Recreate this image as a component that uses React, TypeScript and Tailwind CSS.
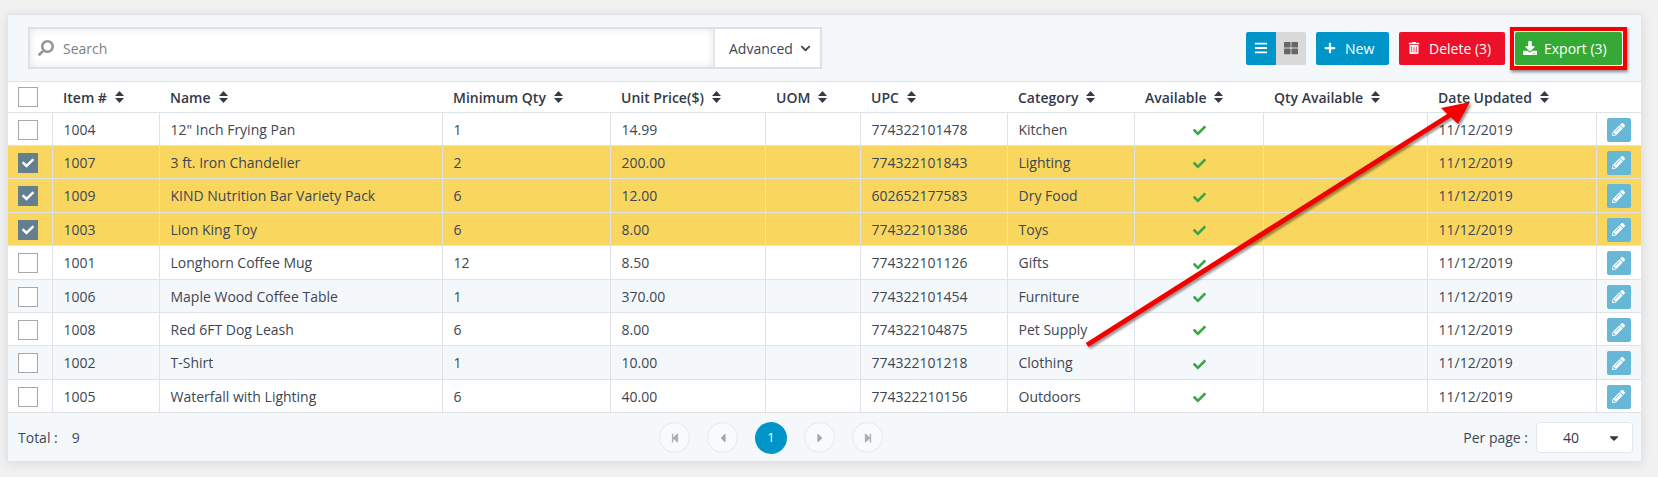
import { FaBars, FaCaretDown, FaCaretLeft, FaCaretRight, FaCheck, FaChevronDown, FaDownload, FaPencilAlt, FaPlus, FaSearch, FaStepBackward, FaStepForward, FaThLarge, FaTrashAlt } from 'react-icons/fa';
import type { ReactNode } from 'react';

interface Item {
  id: string;
  name: string;
  qty: string;
  price: string;
  upc: string;
  category: string;
  tall?: boolean;
  selected?: boolean;
}

const items: Item[] = [
  { id: '1004', name: '12" Inch Frying Pan', qty: '1', price: '14.99', upc: '774322101478', category: 'Kitchen' },
  { id: '1007', name: '3 ft. Iron Chandelier', qty: '2', price: '200.00', upc: '774322101843', category: 'Lighting', selected: true },
  { id: '1009', name: 'KIND Nutrition Bar Variety Pack', qty: '6', price: '12.00', upc: '602652177583', category: 'Dry Food', selected: true, tall: true },
  { id: '1003', name: 'Lion King Toy', qty: '6', price: '8.00', upc: '774322101386', category: 'Toys', selected: true },
  { id: '1001', name: 'Longhorn Coffee Mug', qty: '12', price: '8.50', upc: '774322101126', category: 'Gifts', tall: true },
  { id: '1006', name: 'Maple Wood Coffee Table', qty: '1', price: '370.00', upc: '774322101454', category: 'Furniture' },
  { id: '1008', name: 'Red 6FT Dog Leash', qty: '6', price: '8.00', upc: '774322104875', category: 'Pet Supply' },
  { id: '1002', name: 'T-Shirt', qty: '1', price: '10.00', upc: '774322101218', category: 'Clothing', tall: true },
  { id: '1005', name: 'Waterfall with Lighting', qty: '6', price: '40.00', upc: '774322210156', category: 'Outdoors' },
];

const headers = ['Item #', 'Name', 'Minimum Qty', 'Unit Price($)', 'UOM', 'UPC', 'Category', 'Available', 'Qty Available', 'Date Updated'];
const widths = [45, 107, 283, 168, 155, 95, 147, 127, 129, 164, 169, 46];

function SortIcon() {
  return (
    <svg width="9" height="12" viewBox="0 0 9 12" className="ml-2 shrink-0 text-[#333a47]" fill="currentColor">
      <path d="M4.5 0 9 5H0z" />
      <path d="M0 7h9l-4.5 5z" />
    </svg>
  );
}

function Checkbox({ checked }: { checked?: boolean }) {
  if (checked) {
    return (
      <span className="flex h-5 w-5 items-center justify-center bg-[#64808f] text-white">
        <FaCheck className="h-3 w-3" />
      </span>
    );
  }
  return <span className="block h-5 w-5 border border-[#a8a8a8] bg-white" />;
}

function PageButton({ children }: { children: ReactNode }) {
  return (
    <button className="flex h-[31px] w-[31px] items-center justify-center rounded-full border border-[#e6eaee] bg-[#f8fafc] text-[#a9b0b7]">
      {children}
    </button>
  );
}

export default function App() {
  return (
    <div className="relative h-[477px] w-[1658px] overflow-hidden bg-[#f1f1f2] pl-[7px] pt-[14px] font-['Open_Sans',sans-serif] text-[14px] text-[#3d4654]">
      <div className="h-[448px] w-[1635px] bg-[#f5f8fb] shadow-[0_1px_10px_rgba(0,0,0,0.1)] outline outline-[#dfe5ec] -outline-offset-1">
        {/* Toolbar */}
        <div className="flex h-[67px] items-center justify-between pl-[21px] pr-5 pt-[1px]">
          <div className="flex h-[42px] w-[794px] border-2 border-[#dce1e6] bg-white">
            <div className="flex flex-1 items-center pl-2 text-[#7a7f86] shadow-[inset_0_0_8px_rgba(0,0,0,0.1)]">
              <FaSearch className="h-4 w-4 -scale-x-100 text-[#969696]" />
              <span className="ml-[9px]">Search</span>
            </div>
            <button className="flex w-[107px] items-center gap-[7px] border-l-2 border-[#e4e7ea] pl-[14px] text-[#3d4654]">
              Advanced
              <FaChevronDown className="h-[11px] w-[11px]" />
            </button>
          </div>
          <div className="flex items-center gap-[10px]">
            <div className="flex h-[33px] overflow-hidden rounded-[2px]">
              <span className="flex w-[30px] items-center justify-center bg-[#0095c8] text-white">
                <FaBars className="h-[14px] w-[14px]" />
              </span>
              <span className="flex w-[30px] items-center justify-center bg-[#d9d9d9] text-[#666]">
                <FaThLarge className="h-[14px] w-[14px]" />
              </span>
            </div>
            <button className="flex h-[33px] w-[73px] items-center gap-[9px] rounded-[2px] bg-[#0095c8] pl-2 text-white">
              <FaPlus className="h-3 w-3" />
              New
            </button>
            <button className="flex h-[33px] w-[106px] items-center gap-[9px] rounded-[2px] bg-[#ec1129] pl-[9px] text-white">
              <FaTrashAlt className="h-3 w-3" />
              Delete (3)
            </button>
            <button className="relative flex h-[33px] w-[107px] items-center gap-[7px] rounded-[2px] bg-[#35a936] pl-2 text-white">
              <FaDownload className="h-[14px] w-[14px]" />
              Export (3)
              <span className="absolute -inset-[5px] border-4 border-[#f40000] shadow-[1px_2px_3px_rgba(0,0,0,0.45)]" />
            </button>
          </div>
        </div>

        {/* Table */}
        <table className="w-[1635px] table-fixed border-collapse">
          <colgroup>
            {widths.map((w, i) => (
              <col key={i} style={{ width: w }} />
            ))}
          </colgroup>
          <thead>
            <tr className="h-[31px] border-y border-[#dfe3e8] bg-white">
              <th className="pl-[11px] text-left font-normal">
                <Checkbox />
              </th>
              {headers.map((h) => (
                <th key={h} className="pl-[11px] text-left font-semibold text-[#333a47]">
                  <span className="flex items-center whitespace-nowrap">
                    {h}
                    <SortIcon />
                  </span>
                </th>
              ))}
              <th />
            </tr>
          </thead>
          <tbody>
            {items.map((item, i) => {
              const cell = item.tall || i === 0 ? 'border border-[#dfe3e8] pl-[11px]' : 'border border-[#dfe3e8] pl-[11px] pt-px';
              return (
                <tr
                  key={item.id}
                  className={`${item.tall ? 'h-[34px]' : 'h-[33px]'} ${item.selected ? 'bg-[#f9d75e]' : i % 2 === 1 ? 'bg-[#f5f8fb]' : 'bg-white'}`}
                >
                  <td className="border-y border-[#dfe3e8] pl-[11px] pt-px">
                    <Checkbox checked={item.selected} />
                  </td>
                  <td className={cell}>{item.id}</td>
                  <td className={cell}>{item.name}</td>
                  <td className={cell}>{item.qty}</td>
                  <td className={cell}>{item.price}</td>
                  <td className="border border-[#dfe3e8]" />
                  <td className={cell}>{item.upc}</td>
                  <td className={cell}>{item.category}</td>
                  <td className="border border-[#dfe3e8] pl-[2px] pt-[3px]">
                    <FaCheck className="mx-auto h-[13px] w-[13px] text-[#3ca64a]" />
                  </td>
                  <td className="border border-[#dfe3e8]" />
                  <td className={cell}>11/12/2019</td>
                  <td className="border-y border-l border-[#dfe3e8] pl-[10px] pt-px">
                    <button className="flex h-6 w-6 items-center justify-center rounded-[2px] bg-[#67b8d6] text-white">
                      <FaPencilAlt className="h-[13px] w-[13px]" />
                    </button>
                  </td>
                </tr>
              );
            })}
          </tbody>
        </table>

        {/* Footer */}
        <div className="flex h-[49px] items-center pl-[11px] pr-[9px]">
          <div className="flex w-[641px] items-center">
            <span>Total :</span>
            <span className="ml-[14px]">9</span>
          </div>
          <div className="flex items-center gap-[17px]">
            <PageButton>
              <FaStepBackward className="h-[10px] w-[10px]" />
            </PageButton>
            <PageButton>
              <FaCaretLeft className="h-[14px] w-[14px] text-[#a0a7ae]" />
            </PageButton>
            <span className="flex h-8 w-8 items-center justify-center rounded-full bg-[#0095c8] text-[13px] text-white">1</span>
            <PageButton>
              <FaCaretRight className="h-[14px] w-[14px] text-[#a0a7ae]" />
            </PageButton>
            <PageButton>
              <FaStepForward className="h-[10px] w-[10px]" />
            </PageButton>
          </div>
          <div className="ml-auto flex items-center gap-2">
            <span>Per page :</span>
            <div className="flex h-[31px] w-[97px] items-center rounded-[4px] border border-[#e3e7eb] bg-white pl-[26px] pr-[11px] text-[#333a47]">
              40
              <FaCaretDown className="ml-auto h-[14px] w-[14px] text-[#333a47]" />
            </div>
          </div>
        </div>
      </div>

      {/* Red annotation arrow */}
      <svg className="pointer-events-none absolute left-0 top-0 drop-shadow-[2px_2px_1px_rgba(0,0,0,0.4)]" width="1658" height="477" viewBox="0 0 1658 477">
        <line x1="1087" y1="345" x2="1450" y2="115" stroke="#f40000" strokeWidth="5" />
        <polygon points="1470,102 1441,108 1458,124" fill="#f40000" />
      </svg>
    </div>
  );
}
